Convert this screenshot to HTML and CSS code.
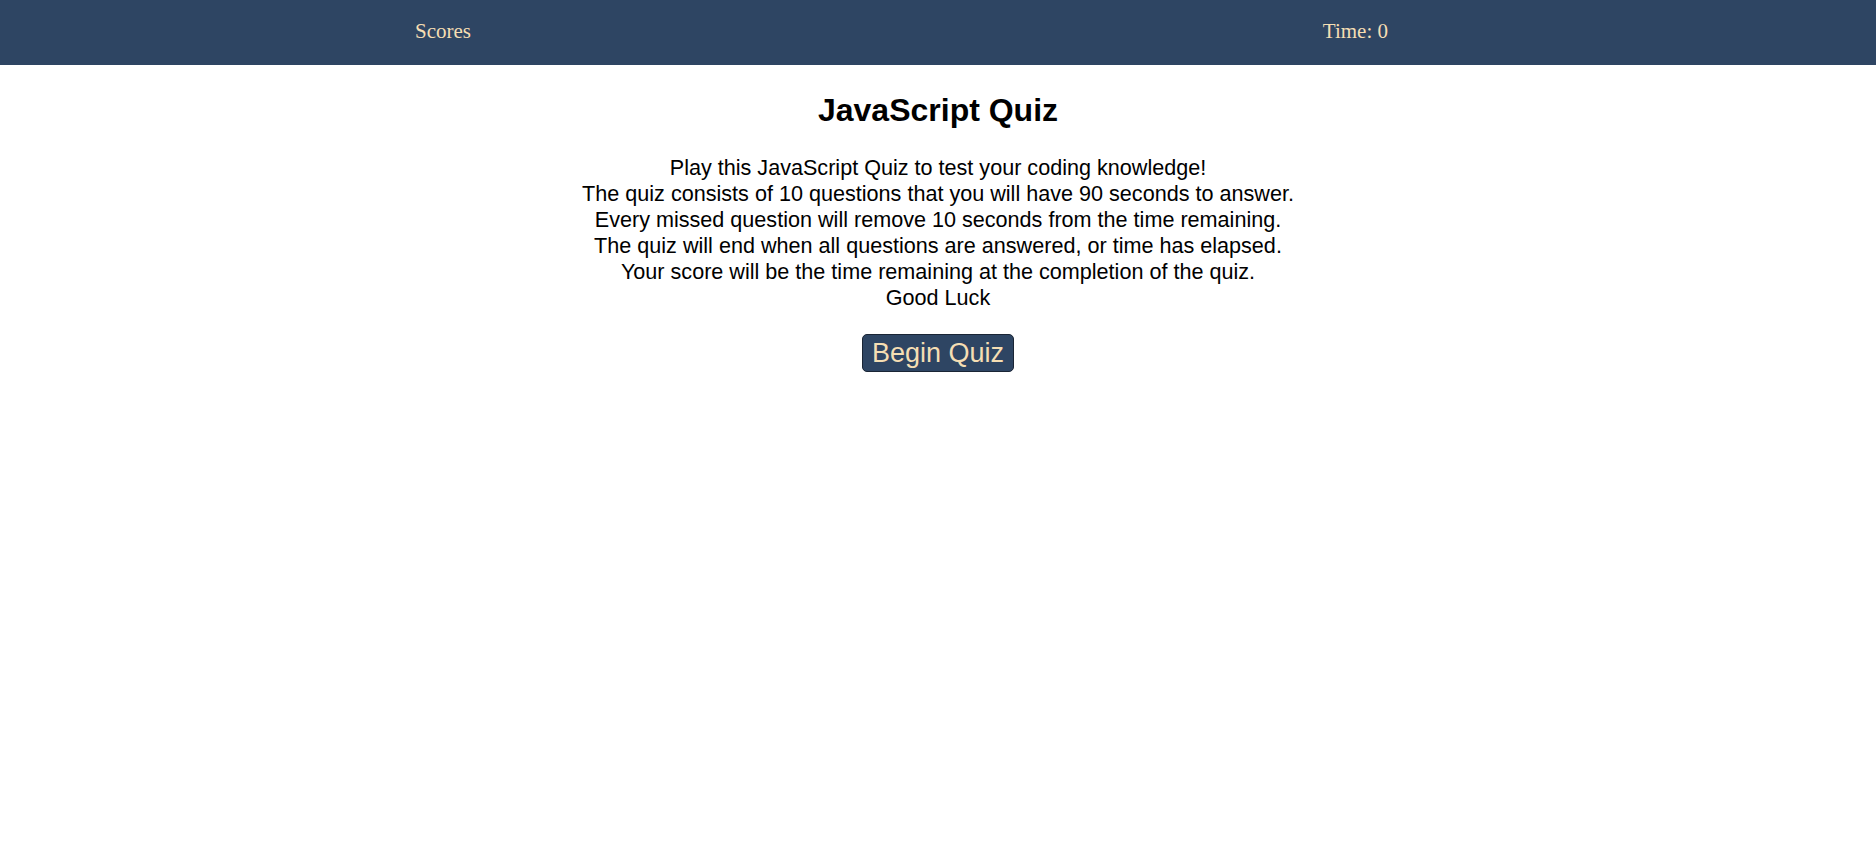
FILE: index.html
```html
<!DOCTYPE html>
<html lang="en">
<head>
<meta charset="utf-8">
<title>JavaScript Quiz</title>
<link rel="stylesheet" href="styles.css">
</head>
<body>
<header class="topbar">
  <a class="topbar-link" href="#">Scores</a>
  <span class="topbar-timer">Time: 0</span>
</header>
<main class="quiz">
  <h1 class="quiz-title">JavaScript Quiz</h1>
  <p class="quiz-intro">Play this JavaScript Quiz to test your coding knowledge!<br>
  The quiz consists of 10 questions that you will have 90 seconds to answer.<br>
  Every missed question will remove 10 seconds from the time remaining.<br>
  The quiz will end when all questions are answered, or time has elapsed.<br>
  Your score will be the time remaining at the completion of the quiz.<br>
  Good Luck</p>
  <button class="quiz-start" type="button">Begin Quiz</button>
</main>
</body>
</html>
```

FILE: styles.css
```css
html, body {
  margin: 0;
  padding: 0;
  background: #ffffff;
}

.topbar {
  height: 65px;
  box-sizing: border-box;
  background: #2e4563;
  display: flex;
  align-items: center;
  justify-content: space-between;
  padding: 0 488px 2px 415px;
  font-family: "Liberation Serif", "Times New Roman", serif;
  font-size: 21px;
  color: #f5deb3;
}

.topbar-link {
  color: #f5deb3;
  text-decoration: none;
}

.quiz {
  display: flex;
  flex-direction: column;
  align-items: center;
  font-family: "Liberation Sans", Arial, sans-serif;
  color: #000;
}

.quiz-title {
  font-size: 32px;
  font-weight: bold;
  margin: 27px 0 0;
}

.quiz-intro {
  font-size: 21.6px;
  line-height: 26px;
  text-align: center;
  margin: 26px 0 0;
}

.quiz-start {
  margin-top: 23px;
  font-family: "Liberation Sans", Arial, sans-serif;
  font-size: 27px;
  padding: 3px 9px 2px;
  background: #2e4563;
  color: #f5deb3;
  border: 1px solid #1a2535;
  border-radius: 5px;
}
```
